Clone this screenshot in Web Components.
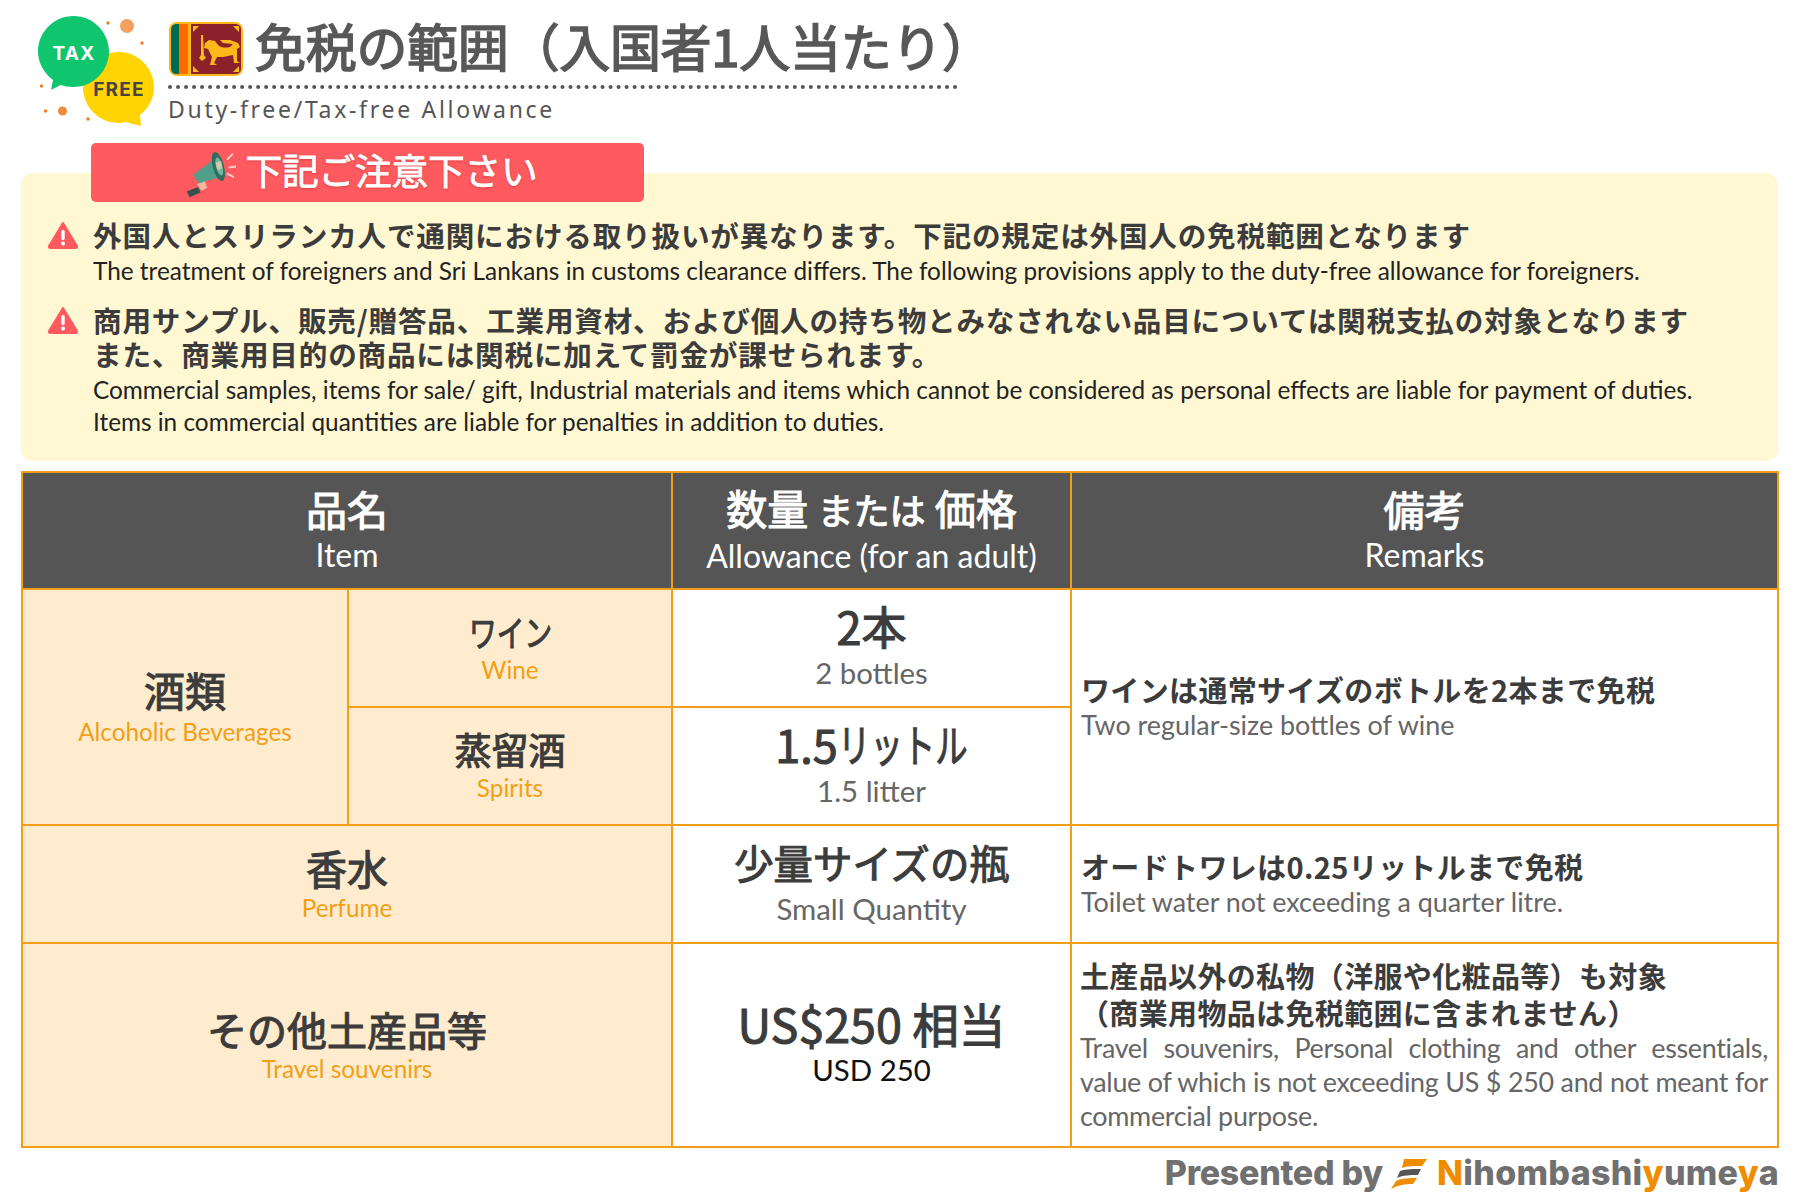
<!DOCTYPE html>
<html lang="ja">
<head>
<meta charset="utf-8">
<title>Duty-free allowance</title>
<style>
  html, body { margin: 0; background: #fff; }
  body { font-family: "Lato", "Noto Sans CJK JP", sans-serif; width: 1800px; height: 1200px; overflow: hidden; }
  .narrow { display: inline-block; transform-origin: 0 50%; white-space: nowrap; text-align: left; }
</style>
</head>
<body>
<allowance-page>
  <page-head slot="head"></page-head>
  <notice-panel slot="notice" heading="下記ご注意下さい">
    <notice-item>
      <span slot="ja">外国人とスリランカ人で通関における取り扱いが異なります。下記の規定は外国人の免税範囲となります</span>
      <span>The treatment of foreigners and Sri Lankans in customs clearance differs. The following provisions apply to the duty-free allowance for foreigners.</span>
    </notice-item>
    <notice-item>
      <span slot="ja">商用サンプル、販売/贈答品、工業用資材、および個人の持ち物とみなされない品目については関税支払の対象となります<br>また、商業用目的の商品には関税に加えて罰金が課せられます。</span>
      <span>Commercial samples, items for sale/ gift, Industrial materials and items which cannot be considered as personal effects are liable for payment of duties.<br>Items in commercial quantities are liable for penalties in addition to duties.</span>
    </notice-item>
  </notice-panel>
  <allowance-table slot="table">
    <table-cell kind="head" style="grid-column:1/3"><span slot="ja">品名</span>Item</table-cell>
    <table-cell kind="head" style="grid-column:3"><span slot="ja">数量 <span style="font-size:36px">または</span> 価格</span>Allowance (for an adult)</table-cell>
    <table-cell kind="head" style="grid-column:4"><span slot="ja">備考</span>Remarks</table-cell>

    <table-cell kind="item" style="grid-column:1;grid-row:2/4;--p:5px;--lh:55px"><span slot="ja">酒類</span>Alcoholic Beverages</table-cell>
    <table-cell kind="item" style="grid-column:2;grid-row:2;--ja:36px;--p:5px;--lh:48px"><span slot="ja" class="narrow" style="width:83px;transform:scaleX(.77)">ワイン</span>Wine</table-cell>
    <table-cell kind="qty" style="grid-column:3;grid-row:2;--ja:45px"><span slot="ja">2本</span>2 bottles</table-cell>
    <table-cell kind="note" style="grid-column:4;grid-row:2/4"><span slot="ja">ワインは通常サイズのボトルを2本まで免税</span>Two regular-size bottles of wine</table-cell>

    <table-cell kind="item" style="grid-column:2;grid-row:3;--ja:37px;--p:5px;--lh:48px"><span slot="ja">蒸留酒</span>Spirits</table-cell>
    <table-cell kind="qty" style="grid-column:3;grid-row:3;--ja:45px"><span slot="ja">1.5<span class="narrow" style="width:130px;transform:scaleX(.72)">リットル</span></span>1.5 litter</table-cell>

    <table-cell kind="item" style="grid-column:1/3;grid-row:4;--p:5px;--lh:52px"><span slot="ja">香水</span>Perfume</table-cell>
    <table-cell kind="qty" style="grid-column:3;grid-row:4"><span slot="ja">少量サイズの瓶</span>Small Quantity</table-cell>
    <table-cell kind="note" style="grid-column:4;grid-row:4"><span slot="ja">オードトワレは0.25リットルまで免税</span>Toilet water not exceeding a quarter litre.</table-cell>

    <table-cell kind="item" style="grid-column:1/3;grid-row:5;--ja:40px;--p:2px"><span slot="ja">その他土産品等</span>Travel souvenirs</table-cell>
    <table-cell kind="qty" dark style="grid-column:3;grid-row:5;--ja:46.6px"><span slot="ja">US$250 相当</span>USD 250</table-cell>
    <table-cell kind="note" tight style="grid-column:4;grid-row:5"><span slot="ja">土産品以外の私物（洋服や化粧品等）も対象<br>（商業用物品は免税範囲に含まれません）</span>Travel souvenirs, Personal clothing and other essentials, value of which is not exceeding US $ 250 and not meant for commercial purpose.</table-cell>
  </allowance-table>
  <page-credit slot="credit"></page-credit>
</allowance-page>

<script>
'use strict';

const JP = '"Noto Sans CJK JP", sans-serif';
const ORANGE = '#f29f17';

function shadow(el, html) {
  const template = document.createElement('template');
  template.innerHTML = html;
  el.attachShadow({ mode: 'open' }).appendChild(template.content.cloneNode(true));
}

customElements.define('allowance-page', class extends HTMLElement {
  constructor() {
    super();
    shadow(this, `
      <style>
        :host { display: flex; flex-direction: column; padding: 15px 21px 0; width: 1758px; }
        .table { display: block; margin-top: 10px; }
      </style>
      <slot name="head"></slot>
      <slot name="notice"></slot>
      <div class="table"><slot name="table"></slot></div>
      <slot name="credit"></slot>`);
  }
});

customElements.define('page-head', class extends HTMLElement {
  constructor() {
    super();
    shadow(this, `
      <style>
        :host { display: flex; align-items: flex-start; padding-left: 17px; height: 128px; }
        .logo { width: 118px; height: 112px; flex: none; overflow: visible; }
        .logo text { font: 700 19px "Inter", sans-serif; letter-spacing: 1.2px; text-anchor: middle; }
        .right { margin-left: 12px; width: 790px; padding-top: 2px; }
        .top { display: flex; align-items: center; gap: 11px; height: 64px; }
        .flag { width: 76px; height: 56px; flex: none; }
        h1 { margin: -8px 0 0; font: 400 51px/64px ${JP}; -webkit-text-stroke: 1.6px #585858; color: #585858; letter-spacing: -.3px; white-space: nowrap; }
        .sub { border-top: 4px dotted #555; margin-top: 4px; padding-top: 5px; font: 400 23px/30px "Noto Sans", sans-serif; letter-spacing: 2.7px; color: #555; }
      </style>
      <svg class="logo" viewBox="0 0 118 112">
        <circle cx="89" cy="11" r="7" fill="#f5a05f"/>
        <circle cx="70" cy="8" r="1.7" fill="#ee7d22"/>
        <circle cx="104" cy="28" r="1.7" fill="#ee7d22"/>
        <circle cx="3.5" cy="71" r="1.7" fill="#ee7d22"/>
        <circle cx="7.5" cy="96" r="1.7" fill="#ee7d22"/>
        <circle cx="24.5" cy="96" r="4.5" fill="#f08b3a"/>
        <circle cx="50" cy="104" r="1.7" fill="#ee7d22"/>
        <path d="M81 37c19 0 35 16 35 35 0 12-6 22-14 28l1 11-16-4c-3 1-4 1-6 1-20 0-36-16-36-36s16-35 36-35z" fill="#ffd400"/>
        <path d="M35.500 1C55 1 71 17 71 36.500S55 72 35.500 72c-5 0-9-1-13-2L13 75l2-10C6 58 0 48 0 36.500 0 17 16 1 35.500 1z" fill="#0fc66f"/>
        <text x="36" y="45" fill="#fff">TAX</text>
        <text x="81" y="81" fill="#444">FREE</text>
      </svg>
      <div class="right">
        <div class="top">
          <svg class="flag" viewBox="0 0 76 56">
            <rect x="1" y="1" width="74" height="54" rx="8" fill="#ffb81c"/>
            <path d="M9 3H11V53H9C5 53 3 51 3 47V9C3 5 5 3 9 3Z" fill="#006a4e"/>
            <rect x="11" y="3" width="9" height="50" fill="#ff6a00"/>
            <path d="M23 3H67C71 3 73 5 73 9V47C73 51 71 53 67 53H23Z" fill="#8d2129"/>
            <path d="M25 5h6l-6 6zM71 5v6l-6-6zM25 51v-6l6 6zM71 51h-6l6-6z" fill="#ffb81c"/>
            <path d="M33 14h2l1 20 2 3-4 3-3-3 2-3zM37 22l4-3 6 1 3 4c3 3 8 3 12 2l3-3-10-1-3-3 10 0 8 3 2 4-3 2 0 12 3 2-6 0-1-8-10 2-6 0-3 6 3 2-7 0 2-8-4-8-4-1z" fill="#ffb81c"/>
          </svg>
          <h1>免税の範囲（入国者1人当たり）</h1>
        </div>
        <div class="sub">Duty-free/Tax-free Allowance</div>
      </div>`);
  }
});

customElements.define('notice-panel', class extends HTMLElement {
  constructor() {
    super();
    shadow(this, `
      <style>
        :host { display: block; position: relative; z-index: 0; }
        .banner {
          position: relative; z-index: 1; display: flex; align-items: center; justify-content: center; gap: 10px;
          box-sizing: border-box; width: 553px; height: 59px; margin-left: 70px; margin-bottom: -29px; padding: 0 14px 7px 0;
          background: #ff5a5f; border-radius: 5px; color: #fff;
          font: 400 36.7px/52px ${JP}; -webkit-text-stroke: .8px #fff; letter-spacing: -.2px;
          text-shadow: 0 1px 3px rgba(120, 0, 0, .35);
        }
        .banner svg { width: 52px; height: 50px; flex: none; margin-top: 7px; }
        .panel {
          background: #fff8d3; border-radius: 12px; height: 288px;
          padding: 45px 0 0 26px; box-sizing: border-box; width: 1757px;
          display: flex; flex-direction: column; gap: 16px;
        }
      </style>
      <div class="banner">
        <svg viewBox="0 0 56 52">
          <path d="M3 46l12-5 3 6-12 5z" fill="#35524a"/>
          <path d="M14 38l8-4 3 8-6 3z" fill="#f2b8a0"/>
          <path d="M10 28l24-18 6 20-24 7z" fill="#4f9f8b"/>
          <ellipse cx="37" cy="19" rx="6" ry="16" transform="rotate(-15 37 19)" fill="#2a6f60"/>
          <ellipse cx="38" cy="19" rx="3.500" ry="10" transform="rotate(-15 38 19)" fill="#6fb8a4"/>
          <path d="M34 15l6-2 1 8-5 2z" fill="#d9c8a8"/>
          <path d="M47 11l5-5M49 20l7-1M47 27l6 3" stroke="#ffd9cf" stroke-width="2" stroke-linecap="round"/>
        </svg>
        <span></span>
      </div>
      <div class="panel"><slot></slot></div>`);
    this.shadowRoot.querySelector('.banner span').textContent = this.getAttribute('heading');
  }
});

customElements.define('notice-item', class extends HTMLElement {
  constructor() {
    super();
    shadow(this, `
      <style>
        :host { display: grid; grid-template-columns: 46px 1fr; color: #111; }
        svg { width: 32px; height: 28px; margin-top: 3px; }
        .ja { font: 700 28.6px/34px ${JP}; color: #3c3c3c; white-space: nowrap; letter-spacing: .8px; }
        .en { font: 400 24.35px/32px "Lato", sans-serif; color: #222; white-space: nowrap; margin-top: 3px; }
      </style>
      <svg viewBox="0 0 32 28">
        <path d="M16 2L30 25a1.500 1.500 0 0 1-1 2H3a1.500 1.500 0 0 1-1-2Z" fill="#ff5a5f" stroke="#ff5a5f" stroke-width="2" stroke-linejoin="round"/>
        <rect x="14.300" y="9" width="3.400" height="10" rx="1.500" fill="#fff"/>
        <circle cx="16" cy="22.500" r="2" fill="#fff"/>
      </svg>
      <div>
        <div class="ja"><slot name="ja"></slot></div>
        <div class="en"><slot></slot></div>
      </div>`);
  }
});

customElements.define('allowance-table', class extends HTMLElement {
  constructor() {
    super();
    shadow(this, `
      <style>
        :host { display: block; }
        .grid {
          display: grid; gap: 2px; padding: 2px; background: ${ORANGE}; width: 1754px;
          grid-template-columns: 324px 322px 397px 705px;
          grid-template-rows: 115px 116px 116px 116px 202px;
        }
      </style>
      <div class="grid"><slot></slot></div>`);
  }
});

customElements.define('table-cell', class extends HTMLElement {
  constructor() {
    super();
    shadow(this, `
      <style>
        :host { display: flex; flex-direction: column; justify-content: center; text-align: center; font-family: "Lato", sans-serif; background: #fff; min-width: 0; }
        .ja { font-family: ${JP}; font-weight: 400; -webkit-text-stroke: 1.1px currentColor; }
        :host([kind="head"]) { background: #555; color: #fff; padding-bottom: 4px; }
        :host([kind="head"]) .ja { font-size: 41px; line-height: 53px; }
        :host([kind="head"]) .en { font-size: 32px; line-height: 40px; }
        :host([kind="item"]) { background: #ffecce; padding-bottom: var(--p, 0); }
        :host([kind="item"]) .ja { font-size: var(--ja, 41px); line-height: var(--lh, 50px); color: #3c3c3c; }
        :host([kind="item"]) .en { font-size: 24.3px; line-height: 30px; color: ${ORANGE}; }
        :host([kind="qty"]) { padding-bottom: 7px; }
        :host([kind="qty"]) .ja { font-size: var(--ja, 39.4px); line-height: 57px; color: #3c3c3c; }
        :host([kind="qty"]) .en { font-size: 29.4px; line-height: 38px; color: #666; }
        :host([kind="qty"][dark]) .en { color: #111; }
        :host([kind="note"]) { text-align: left; padding: 0 9px 2px 9px; }
        :host([kind="note"]) .ja { font-size: 29px; font-weight: 700; -webkit-text-stroke: 0; line-height: 37px; letter-spacing: .35px; color: #3c3c3c; white-space: nowrap; }
        :host([kind="note"]) .en { font-size: 26.9px; line-height: 34px; color: #666; text-align: justify; }
        :host([tight]) { padding: 0 9px 1px 8px; }
        :host([tight]) .en { letter-spacing: -.3px; }
      </style>
      <div class="ja"><slot name="ja"></slot></div>
      <div class="en"><slot></slot></div>`);
  }
});

customElements.define('page-credit', class extends HTMLElement {
  constructor() {
    super();
    shadow(this, `
      <style>
        :host { display: flex; justify-content: flex-end; align-items: center; height: 50px; font: 800 34px/50px "Inter", sans-serif; color: #707070; letter-spacing: -.3px; white-space: nowrap; }
        svg { width: 36px; height: 32px; margin: 0 10px 0 8px; }
        b { color: #f08c00; font-weight: 800; }
        .name { letter-spacing: .3px; }
      </style>
      <span>Presented by</span>
      <svg viewBox="0 0 36 32">
        <path d="M13 2h23l-5 7c-8 0-15 0-20 2z" fill="#f08c00"/>
        <path d="M9 14c6-2 15-2 21-2l-3 6c-8 0-15 0-21 3z" fill="#555"/>
        <path d="M5 24c6-3 14-3 21-3l-4 6c-8 0-15 1-22 5z" fill="#f08c00"/>
      </svg>
      <span class="name"><b>N</b>ihombashi<b>y</b>ume<b>y</b>a</span>`);
  }
});
</script>
</body>
</html>
